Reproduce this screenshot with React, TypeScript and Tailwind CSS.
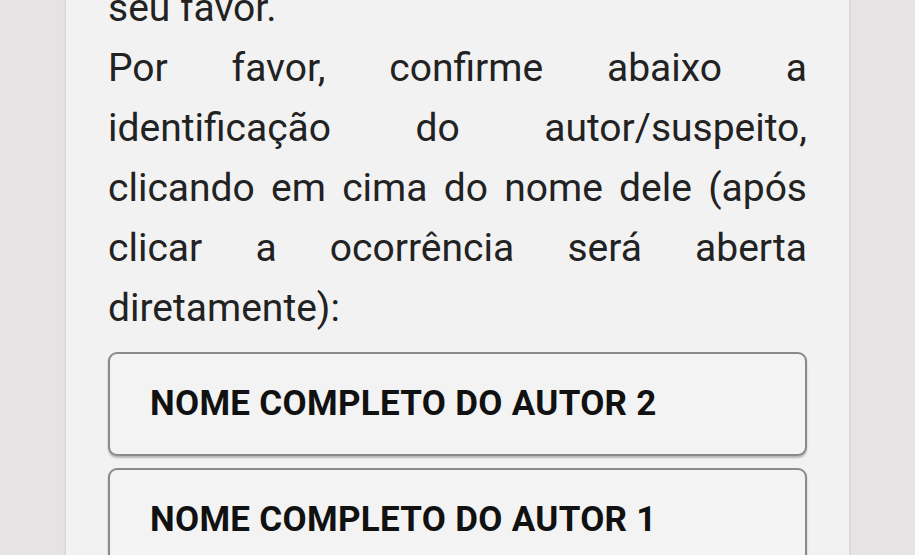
export default function App() {
  return (
    <div className="w-[915px] h-[555px] overflow-hidden bg-[#e7e3e4] font-['Roboto',sans-serif]">
      <div className="ml-[66px] w-[783px] h-[600px] bg-[#f2f2f2] shadow-[0_0_3px_rgba(0,0,0,0.15)] pl-[42px] pr-[42px] -mt-[22px]">
        <p className="text-[39px] leading-[60px] text-[#222] text-justify">seu favor.</p>
        <p className="text-[39px] leading-[60px] text-[#222] text-justify">
          Por favor, confirme abaixo a identificação do autor/suspeito, clicando em cima do nome dele (após clicar a ocorrência será aberta diretamente):
        </p>
        <div className="mt-[14px] flex flex-col gap-[12px]">
          {['NOME COMPLETO DO AUTOR 2', 'NOME COMPLETO DO AUTOR 1'].map((n) => (
            <button
              key={n}
              className="h-[104px] w-full text-left pl-[40px] bg-[#f3f3f3] border-2 border-[#8a8a8a] rounded-[9px] shadow-[0_2px_2px_rgba(0,0,0,0.25)] text-[35px] tracking-[0.3px] font-bold text-[#111]"
            >
              {n}
            </button>
          ))}
        </div>
      </div>
    </div>
  );
}
